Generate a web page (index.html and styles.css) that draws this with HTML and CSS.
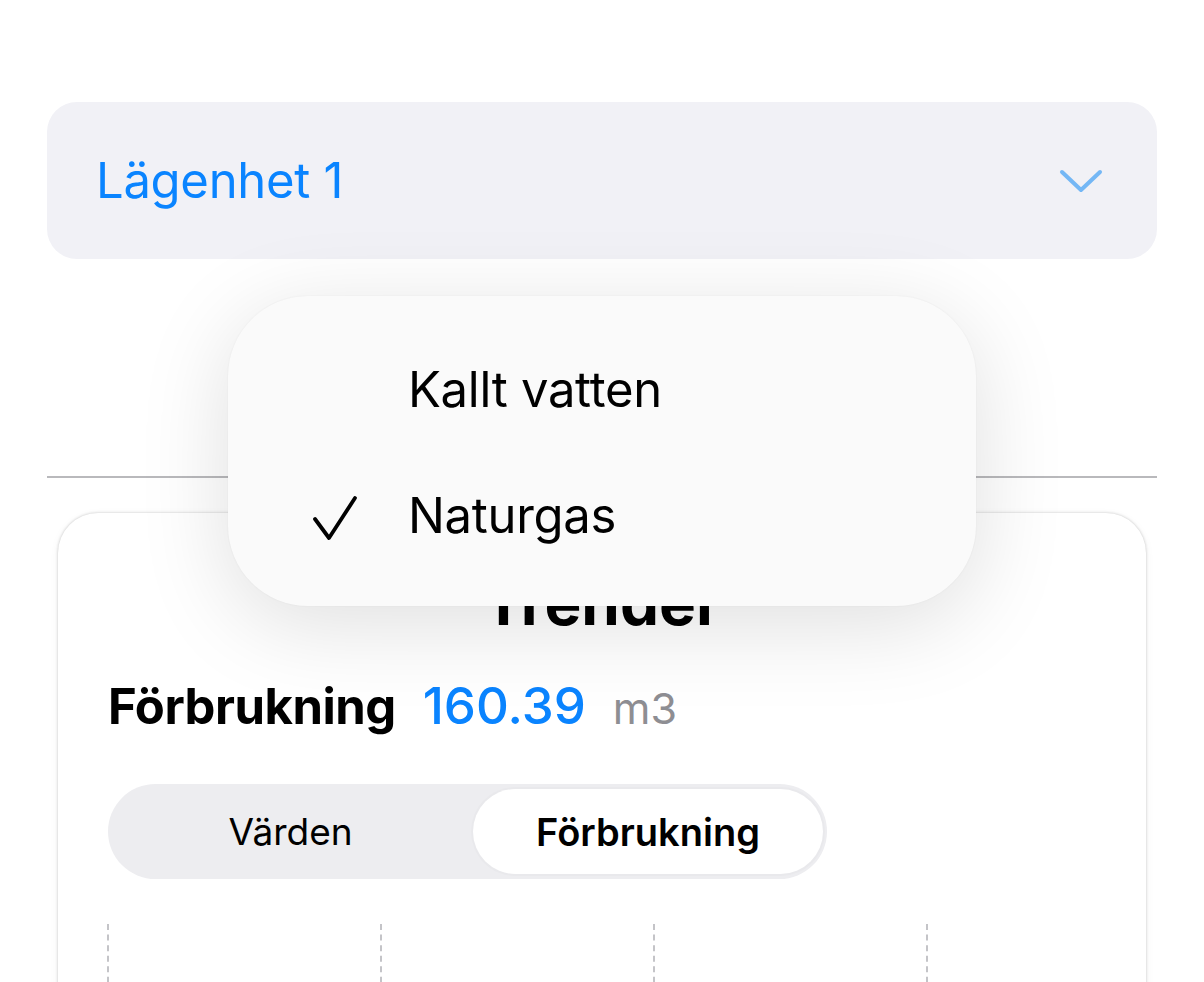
FILE: index.html
```html
<!DOCTYPE html>
<html lang="sv">
<head>
<meta charset="utf-8">
<title>Trender</title>
<link rel="stylesheet" href="styles.css">
</head>
<body>
<div class="page">
  <div class="select">
    <span class="select-label">Lägenhet 1</span>
    <svg class="chevron" width="44" height="26" viewBox="0 0 44 26"><path d="M3 4 L22 22 L41 4" fill="none" stroke="#74b7f5" stroke-width="4" stroke-linecap="round" stroke-linejoin="round"/></svg>
  </div>
  <div class="gap"></div>
  <div class="divider"></div>
  <div class="card">
    <h1 class="card-title">Trender</h1>
    <div class="summary">
      <span class="summary-label">Förbrukning</span>
      <span class="summary-value">160.39</span>
      <span class="summary-unit">m3</span>
    </div>
    <div class="segmented">
      <div class="segment">Värden</div>
      <div class="segment active">Förbrukning</div>
    </div>
    <div class="chart">
      <div class="gridline"></div>
      <div class="gridline"></div>
      <div class="gridline"></div>
      <div class="gridline"></div>
    </div>
  </div>
</div>
<div class="menu">
  <div class="menu-item">
    <span class="check"></span>
    <span class="menu-text">Kallt vatten</span>
  </div>
  <div class="menu-item">
    <span class="check"><svg width="46" height="46" viewBox="0 0 46 46"><path d="M3 23 L17 42 L43 2" fill="none" stroke="#000" stroke-width="3.8" stroke-linecap="round" stroke-linejoin="round"/></svg></span>
    <span class="menu-text">Naturgas</span>
  </div>
</div>
</body>
</html>
```
FILE: styles.css
```css
html, body {
  margin: 0;
  padding: 0;
  background: #ffffff;
}
body {
  width: 1204px;
  height: 982px;
  overflow: hidden;
  position: relative;
  font-family: Inter, "Noto Sans", sans-serif;
  color: #000;
}
.page {
  padding: 102px 47px 0;
}
.select {
  height: 157px;
  border-radius: 30px;
  background: #f1f1f6;
  display: flex;
  align-items: center;
  justify-content: space-between;
  padding: 0 54px 0 49px;
}
.select-label {
  font-size: 49px;
  color: #0a84ff;
  letter-spacing: -0.3px;
}
.chevron {
  display: block;
}
.gap {
  height: 217px;
}
.divider {
  height: 2px;
  background: #b9b9bc;
}
.card {
  margin: 35px 11px 0;
  height: 600px;
  border-radius: 40px;
  background: #fff;
  box-shadow: 0 0 3px rgba(0,0,0,0.22), 0 2px 10px rgba(0,0,0,0.05);
  padding: 0 50px;
}
.card-title {
  margin: 0;
  padding-top: 52px;
  text-align: center;
  font-size: 62px;
  line-height: 76px;
  font-weight: 700;
}
.summary {
  margin-top: 35px;
  display: flex;
  align-items: baseline;
  gap: 27px;
  line-height: 60px;
}
.summary-label {
  font-size: 49px;
  font-weight: 700;
  letter-spacing: -0.5px;
}
.summary-value {
  font-size: 51px;
  font-weight: 500;
  color: #0a84ff;
}
.summary-unit {
  font-size: 43px;
  color: #8e8e93;
}
.segmented {
  margin-top: 46px;
  width: 719px;
  height: 95px;
  box-sizing: border-box;
  border-radius: 48px;
  background: #ededf0;
  display: flex;
  padding: 5px 4px 5px 0;
}
.segment {
  flex: 1;
  display: flex;
  align-items: center;
  justify-content: center;
  font-size: 37px;
  font-weight: 400;
  border-radius: 43px;
}
.segment.active {
  flex: 0 0 350px;
  background: #fff;
  font-weight: 600;
  font-size: 38px;
  box-shadow: 0 0 0 2px #e9e9ec;
}
.chart {
  margin-top: 45px;
  display: flex;
  gap: 271px;
  margin-left: -1px;
}
.gridline {
  width: 0;
  height: 80px;
  border-left: 2px dashed #c4c4c8;
}
.menu {
  position: absolute;
  left: 228px;
  top: 296px;
  width: 748px;
  height: 310px;
  box-sizing: border-box;
  border-radius: 80px;
  background: #fafafa;
  box-shadow: 0 18px 90px rgba(0,0,0,0.13), 0 0 2px rgba(0,0,0,0.06);
  padding-top: 30px;
}
.menu-item {
  height: 126px;
  display: flex;
  align-items: center;
}
.check {
  width: 180px;
  display: flex;
  justify-content: flex-start;
  padding-left: 84px;
  box-sizing: border-box;
}
.check svg {
  display: block;
  margin-top: 8px;
}
.menu-text {
  font-size: 49px;
  letter-spacing: -0.3px;
}
```
